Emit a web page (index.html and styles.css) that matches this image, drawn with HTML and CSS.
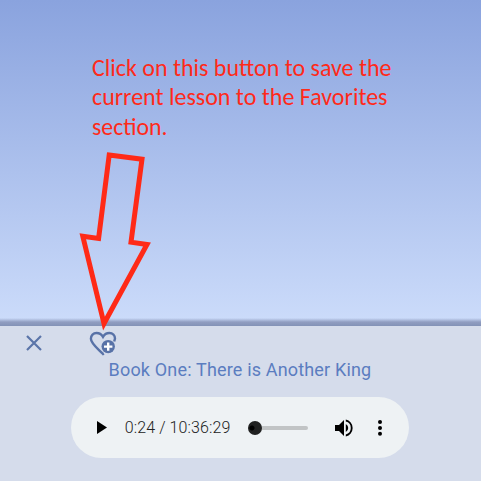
FILE: index.html
```html
<!DOCTYPE html>
<html lang="en">
<head>
<meta charset="utf-8">
<title>Lesson player</title>
<link rel="stylesheet" href="styles.css">
</head>
<body>
<main class="screen">
  <section class="stage"></section>
  <footer class="dock">
    <div class="actions">
      <svg class="close" viewBox="0 0 18 18"><path d="M2 2 16 16M16 2 2 16"/></svg>
      <svg class="favorite" viewBox="0 0 28 26">
        <path class="heart" d="M15 22.6 L14 23 C8 17 1.9 12.5 1.9 7.8 C1.9 4.2 4.3 2 7.5 2 C10.4 2 12.5 3.3 14 5.8 C15.5 3.3 17.6 2 20.3 2 C23.7 2 26 4.3 26 7.7 L25.2 10.5"/>
        <circle cx="19.2" cy="15.6" r="6.7"/>
        <path class="plus" d="M19.2 11.4V19.8M15 15.6H23.4"/>
      </svg>
    </div>
    <h1 class="title">Book One: There is Another King</h1>
    <div class="player">
      <svg class="play" viewBox="0 0 10 13"><path d="M0 0 10 6.5 0 13Z"/></svg>
      <span class="time">0:24 / 10:36:29</span>
      <div class="track"><span class="thumb"></span></div>
      <svg class="volume" viewBox="0 0 18 18"><path d="M0 6V12H4L9 17V1L4 6ZM10.8 5V13A4.5 4.5 0 0 0 10.8 5ZM10.8 .5V2.6A6.6 6.6 0 0 1 10.8 15.4V17.5A8.7 8.7 0 0 0 10.8 .5Z"/></svg>
      <svg class="more" viewBox="0 0 4 16"><circle cx="2" cy="2" r="2"/><circle cx="2" cy="7.9" r="2"/><circle cx="2" cy="13.8" r="2"/></svg>
    </div>
  </footer>
  <svg class="callout" viewBox="0 0 481 481">
    <g class="note">
      <text x="92" y="76" textLength="299.5" lengthAdjust="spacingAndGlyphs">Click on this button to save the</text>
      <text x="92" y="105" textLength="295.5" lengthAdjust="spacingAndGlyphs">current lesson to the Favorites</text>
      <text x="92" y="135.3" textLength="75.5" lengthAdjust="spacingAndGlyphs">section.</text>
    </g>
    <path class="arrow" d="M109.2 155 142 159.2 131 242.2 147 244.5 104 323.5 82.8 236.3 98.6 238.4Z"/>
  </svg>
</main>
</body>
</html>
```
FILE: styles.css
```css
body {
  margin: 0;
}

.screen {
  position: relative;
  display: flex;
  flex-direction: column;
  width: 481px;
  height: 481px;
  overflow: hidden;
  font-family: Roboto, sans-serif;
}

.stage {
  height: 326px;
  background:
    linear-gradient(rgba(125, 141, 182, 0), #909dc1 4px, #8292b7 8px) bottom / 100% 8px no-repeat,
    linear-gradient(#8aa3de, #cbdbfa 320px);
}

.dock {
  flex: 1;
  display: flex;
  flex-direction: column;
  align-items: center;
  background: #d5dceb;
}

.actions {
  display: flex;
  align-items: flex-start;
  align-self: stretch;
  gap: 46px;
  height: 26px;
  padding: 5px 0 0 25px;
}

.close {
  width: 18px;
  height: 18px;
  margin-top: 3px;
  fill: none;
  stroke: #5b75a9;
  stroke-width: 2.2;
}

.favorite {
  width: 28px;
  height: 26px;
  fill: #5872a7;
}

.heart {
  fill: none;
  stroke: #5872a7;
  stroke-width: 2.4;
}

.plus {
  stroke: #fff;
  stroke-width: 2.4;
}

.title {
  margin: 1px 1px 0 0;
  color: #5b7dc0;
  font-size: 18px;
  font-weight: 400;
  letter-spacing: 0.17px;
  line-height: 24px;
}

.player {
  display: flex;
  align-items: center;
  box-sizing: border-box;
  width: 338px;
  height: 61px;
  margin: 15px 0.5px 0 0;
  padding-left: 25.5px;
  border-radius: 31px;
  background: #eef2f4;
}

.play {
  width: 10px;
  height: 13px;
}

.time {
  width: 123px;
  margin-left: 18px;
  color: #222;
  font-size: 16px;
  font-weight: 300;
  letter-spacing: 0.1px;
  white-space: nowrap;
}

.track {
  display: flex;
  align-items: center;
  width: 60px;
  height: 4px;
  border-radius: 2px;
  background: #c1c4c5;
}

.thumb {
  flex: none;
  width: 14px;
  height: 14px;
  border-radius: 50%;
  background: radial-gradient(circle at 4px 7px, #000 2px, #202121 3px);
}

.volume {
  width: 18px;
  height: 18px;
  margin-left: 27px;
}

.more {
  width: 4px;
  height: 16px;
  margin-left: 25px;
}

.callout {
  position: absolute;
  inset: 0;
  width: 481px;
  height: 481px;
}

.note {
  fill: #ff2a1a;
  font-family: Carlito, Lato, sans-serif;
  font-size: 23.5px;
}

.arrow {
  fill: none;
  stroke: #ff2a17;
  stroke-width: 5;
  stroke-miterlimit: 10;
}
```
